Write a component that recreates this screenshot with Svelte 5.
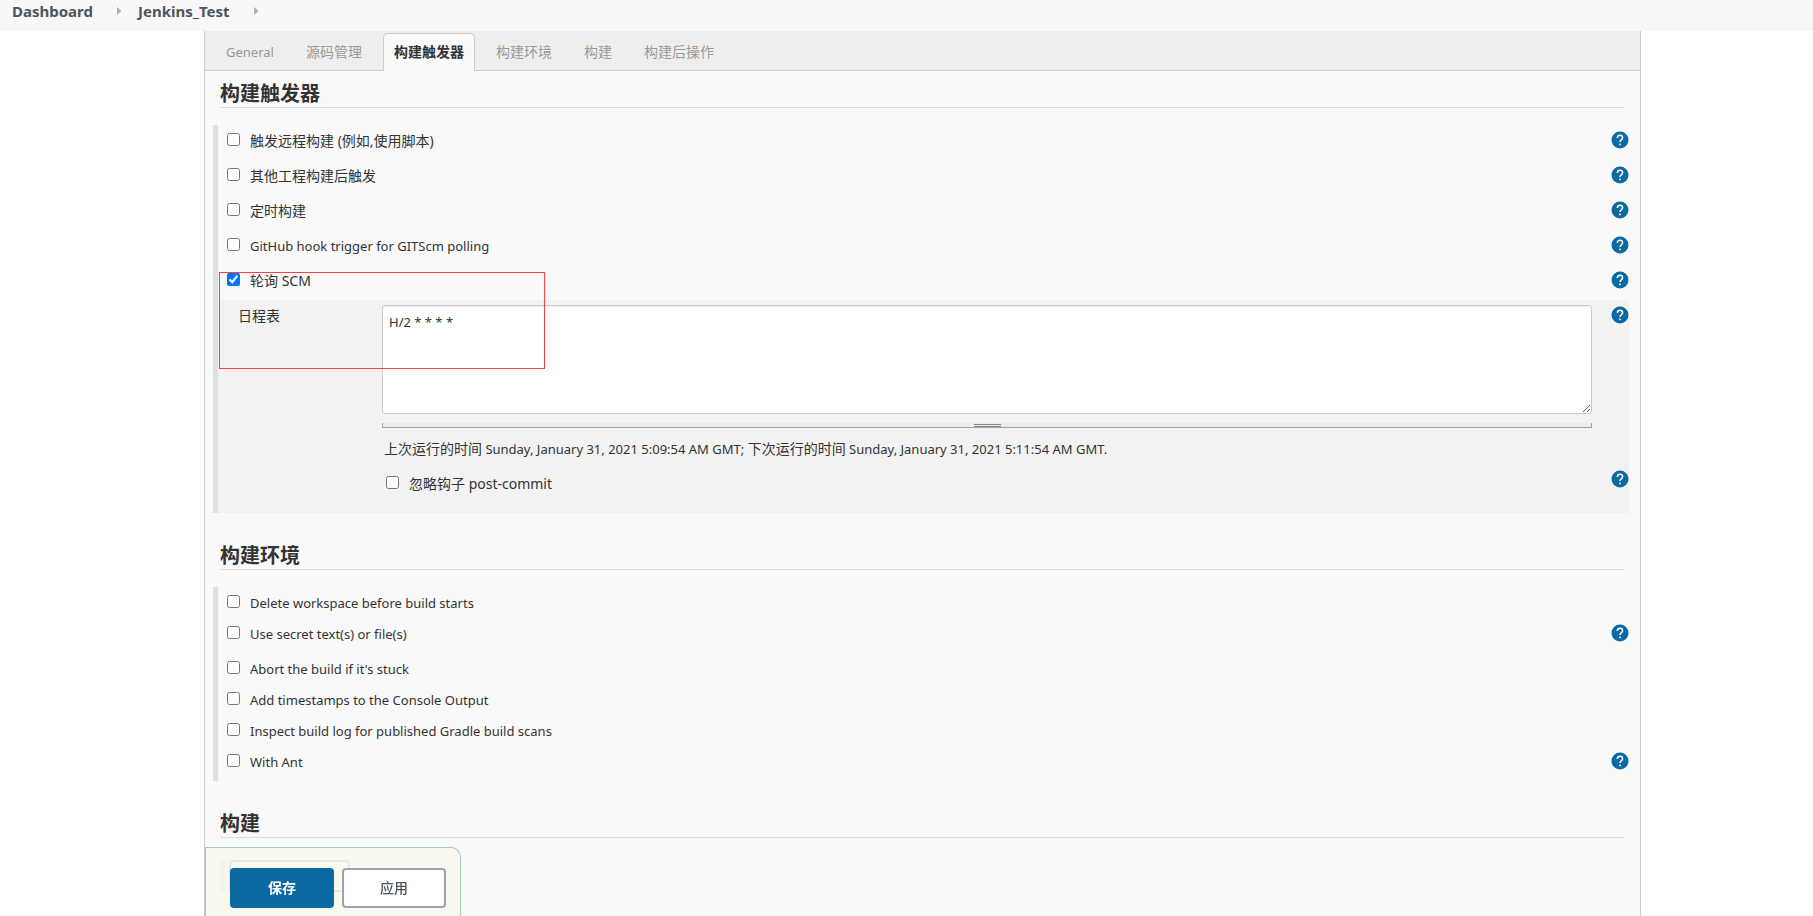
<script lang="ts">

    const tabs = ["General", "源码管理", "构建触发器", "构建环境", "构建", "构建后操作"];
    let activeTab = $state("构建触发器");

    let triggers = $state([
        { id: "remote", label: "触发远程构建 (例如,使用脚本)", checked: false },
        { id: "upstream", label: "其他工程构建后触发", checked: false },
        { id: "timer", label: "定时构建", checked: false },
        { id: "github", label: "GitHub hook trigger for GITScm polling", checked: false },
        { id: "scm", label: "轮询 SCM", checked: true },
    ]);

    let environment = $state([
        { id: "delete-ws", label: "Delete workspace before build starts", checked: false, help: false },
        { id: "secret", label: "Use secret text(s) or file(s)", checked: false, help: true },
        { id: "abort", label: "Abort the build if it's stuck", checked: false, help: false },
        { id: "timestamps", label: "Add timestamps to the Console Output", checked: false, help: false },
        { id: "gradle", label: "Inspect build log for published Gradle build scans", checked: false, help: false },
        { id: "ant", label: "With Ant", checked: false, help: true },
    ]);

    let schedule = $state("H/2 * * * *");
    let ignoreHooks = $state(false);

    // Chinese labels are set one pixel larger than the English ones
    const isChinese = (text: string) => /[\u4e00-\u9fff]/.test(text);
</script>

{#snippet help(name: string)}
    <button type="button" class="help" aria-label="Help: {name}">
        <svg viewBox="0 0 18 18" width="18" height="18">
            <circle cx="9" cy="9" r="8.5" fill="#0b6aa2" />
            <path d="M6.4 6.9C6.4 5.2 7.5 4.2 9 4.2s2.6 1 2.6 2.4c0 1.1-.6 1.7-1.3 2.3-.8.6-1.3 1-1.3 2.2" fill="none" stroke="#fff" stroke-width="1.5" />
            <rect x="8.2" y="12.6" width="1.6" height="1.6" fill="#fff" />
        </svg>
    </button>
{/snippet}

{#snippet arrow()}
    <svg class="arrow" viewBox="0 0 5 8" width="5" height="8"><path d="M0 0l4.5 4L0 8z" fill="#b0b0b0" /></svg>
{/snippet}

<nav class="breadcrumbs">
    <a href="#dashboard">Dashboard</a>
    {@render arrow()}
    <a href="#job">Jenkins_Test</a>
    {@render arrow()}
</nav>

<main>
    <div class="tabs">
        {#each tabs as tab}
            <button type="button" class="tab" class:zh={isChinese(tab)} class:active={tab === activeTab} onclick={() => (activeTab = tab)}>{tab}</button>
        {/each}
    </div>

    <section>
        <h2>构建触发器</h2>
        <div class="group">
            {#each triggers as item}
                <div class="row tall">
                    <input type="checkbox" id={item.id} bind:checked={item.checked} />
                    <label for={item.id} class:zh={isChinese(item.label)}>{item.label}</label>
                    {@render help(item.label)}
                </div>
            {/each}

            <div class="nested">
                <label class="name zh" for="schedule">日程表</label>
                <div class="control">
                    <textarea id="schedule" bind:value={schedule}></textarea>
                    <div class="resizer"><span class="grip"></span></div>
                    <p><span class="zh">上次运行的时间</span> Sunday, January 31, 2021 5:09:54 AM GMT; <span class="zh">下次运行的时间</span> Sunday, January 31, 2021 5:11:54 AM GMT.</p>
                </div>
                {@render help("日程表")}
                <div class="row hooks">
                    <input type="checkbox" id="hooks" bind:checked={ignoreHooks} />
                    <label class="zh" for="hooks">忽略钩子 post-commit</label>
                </div>
                {@render help("post-commit")}
            </div>
            <div class="highlight"></div>
        </div>
    </section>

    <section>
        <h2>构建环境</h2>
        <div class="group">
            {#each environment as item}
                <div class="row" class:tall={item.help}>
                    <input type="checkbox" id={item.id} bind:checked={item.checked} />
                    <label for={item.id}>{item.label}</label>
                    {#if item.help}
                        {@render help(item.label)}
                    {/if}
                </div>
            {/each}
        </div>
    </section>

    <section>
        <h2>构建</h2>
        <div class="steps">
            <button type="button" class="add-step" aria-label="增加构建步骤"></button>
        </div>
    </section>

    <!-- stays over the form at the bottom of the window -->
    <div class="save-bar">
        <button type="submit" class="btn primary">保存</button>
        <button type="button" class="btn">应用</button>
    </div>
</main>

<style>
    :global(body) {
        background: #fff;
        color: #333;
        font-family: "Noto Sans", "Noto Sans CJK SC", sans-serif;
        font-size: 13px;
        line-height: 20px;
    }

    button, textarea {
        font: inherit;
        color: inherit;
    }

    .zh { font-size: 14px; }

    .breadcrumbs {
        display: flex;
        align-items: center;
        height: 31px;
        padding: 0 12px 10px;
        box-sizing: border-box;
        background: #f8f8f8;
        font-size: 15px;
        font-weight: bold;
    }

    .breadcrumbs a {
        color: #4d545d;
        text-decoration: none;
    }

    .arrow { margin: 0 16px 0 24px; }

    main {
        position: relative;
        min-height: calc(100vh - 31px);
        box-sizing: border-box;
        margin: 0 172px 0 204px;
        border: solid #ccc;
        border-width: 0 1px;
        background: #f9f9f9;
    }

    .tabs {
        display: flex;
        align-items: flex-end;
        gap: 10px;
        height: 40px;
        box-sizing: border-box;
        padding-left: 10px;
        border-bottom: 1px solid #ccc;
        background: #eee;
    }

    .tab {
        height: 38px;
        margin-bottom: -1px;
        padding: 0 10px 2px;
        border: 1px solid transparent;
        border-bottom: 0;
        border-radius: 5px 5px 0 0;
        background: none;
        color: #999;
    }

    .tab.active {
        border-color: #ccc;
        background: #f9f9f9;
        color: #333;
        font-weight: bold;
    }

    h2 {
        margin: 0 16px 17px 15px;
        padding-top: 10px;
        border-bottom: 1px solid #ddd;
        font-size: 20px;
        line-height: 26px;
    }

    section + section h2 { padding-top: 30px; }

    .group {
        position: relative;
        margin: 0 11px 0 8px;
        border-left: 5px solid #e0e0e0;
    }

    .row {
        display: flex;
        align-items: flex-start;
        gap: 10px;
        height: 31px;
        padding-left: 9px;
    }

    .tall { height: 35px; }

    .row label, .name { padding-top: 6px; }

    input[type="checkbox"] {
        width: 13px;
        height: 13px;
        margin: 8px 0 0;
    }

    .help {
        display: block;
        width: 18px;
        height: 18px;
        margin: 6px 0 0 auto;
        padding: 0;
        border: 0;
        background: none;
        cursor: pointer;
    }

    .help svg { display: block; }

    .nested {
        display: grid;
        grid-template-columns: 144px 1fr 37px;
        grid-template-rows: 164px 49px;
        align-items: start;
        padding-left: 20px;
        background: #f2f2f2;
    }

    .control { padding-top: 5px; }

    textarea {
        display: block;
        width: 100%;
        height: 109px;
        box-sizing: border-box;
        padding: 6px;
        border: 1px solid #ccc;
        border-radius: 3px;
        background: #fff;
        box-shadow: inset 0 1px 1px #eee;
        resize: vertical;
    }

    .resizer {
        display: flex;
        justify-content: center;
        height: 5px;
        box-sizing: border-box;
        margin-top: 9px;
        border: solid #98a6ae;
        border-width: 0 1px 1px;
        background: #e8eef0;
    }

    .grip {
        width: 27px;
        height: 1px;
        margin-top: 1px;
        border: solid #888;
        border-width: 1px 0;
    }

    p { margin: 11px 0 0 2px; }

    .hooks {
        grid-column: 2;
        padding: 4px 0 0 4px;
    }

    .highlight {
        position: absolute;
        top: 147px;
        left: 1px;
        width: 326px;
        height: 97px;
        box-sizing: border-box;
        border: 1px solid #ff4040;
        pointer-events: none;
    }

    .steps {
        display: flex;
        margin: 22px 15px 0;
        padding-left: 4px;
        border-left: 5px solid #e0e0e0;
    }

    .add-step {
        width: 121px;
        height: 32px;
        border: 2px solid #98a6ae;
        border-radius: 4px;
        background: #fff;
    }

    .save-bar {
        position: fixed;
        bottom: 0;
        display: flex;
        gap: 8px;
        padding: 20px 14px 8px 24px;
        border: solid #a5ceb8;
        border-width: 1px 1px 0;
        border-radius: 0 10px 0 0;
        background: rgba(247, 248, 239, 0.8);
    }

    .btn {
        width: 104px;
        height: 40px;
        border: 2px solid #98a6b0;
        border-radius: 4px;
        background: #fff;
        color: #4d545d;
        font-size: 14px;
        font-weight: 500;
    }

    .primary {
        border-color: #0b6aa2;
        background: #0b6aa2;
        color: #fff;
        font-weight: bold;
    }
</style>
